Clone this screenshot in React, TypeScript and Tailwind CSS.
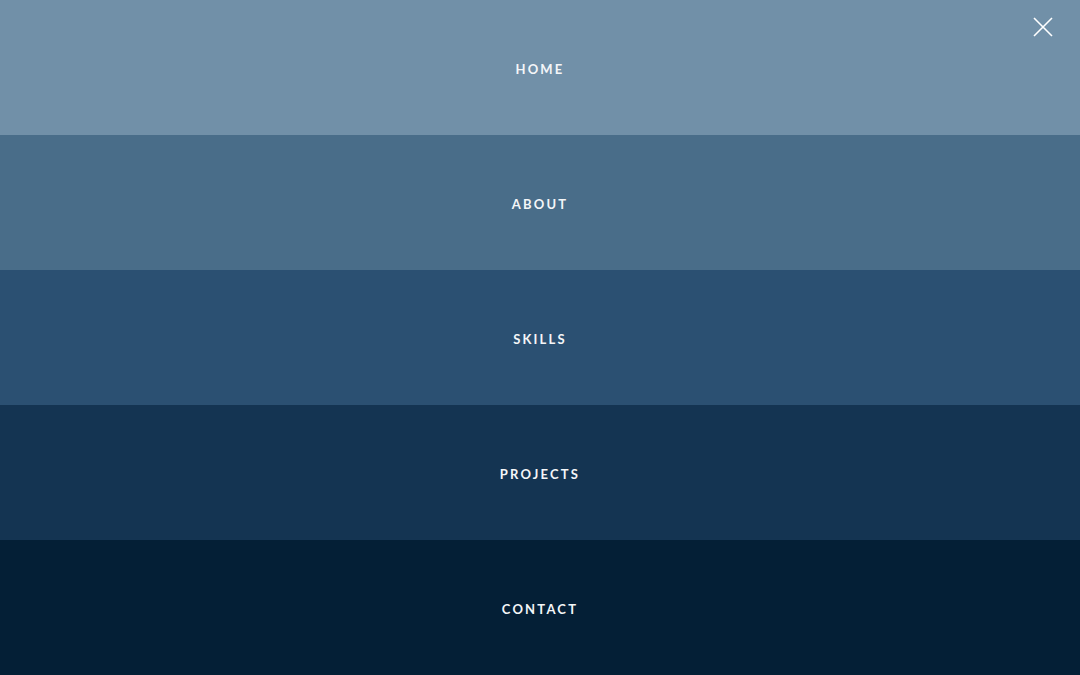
const links = [
  { label: "HOME", bg: "bg-[#7190a8]" },
  { label: "ABOUT", bg: "bg-[#496d89]" },
  { label: "SKILLS", bg: "bg-[#2b5072]" },
  { label: "PROJECTS", bg: "bg-[#143452]" },
  { label: "CONTACT", bg: "bg-[#041f36]" },
]

export default function App() {
  return (
    <div className="relative h-[675px] w-full flex flex-col font-['Lato',sans-serif]">
      {links.map((l) => (
        <a
          key={l.label}
          href="#"
          className={`flex-1 flex items-center justify-center ${l.bg} text-[#f4f6f8] text-[13px] font-bold tracking-[2.2px] pt-[4px]`}
        >
          {l.label}
        </a>
      ))}
      <button className="absolute top-[16px] right-[26px] w-[22px] h-[22px]">
        <svg viewBox="0 0 22 22" className="w-full h-full" fill="none" stroke="#ffffff" strokeWidth="1.6">
          <path d="M2 2 L20 20 M20 2 L2 20" />
        </svg>
      </button>
    </div>
  )
}
